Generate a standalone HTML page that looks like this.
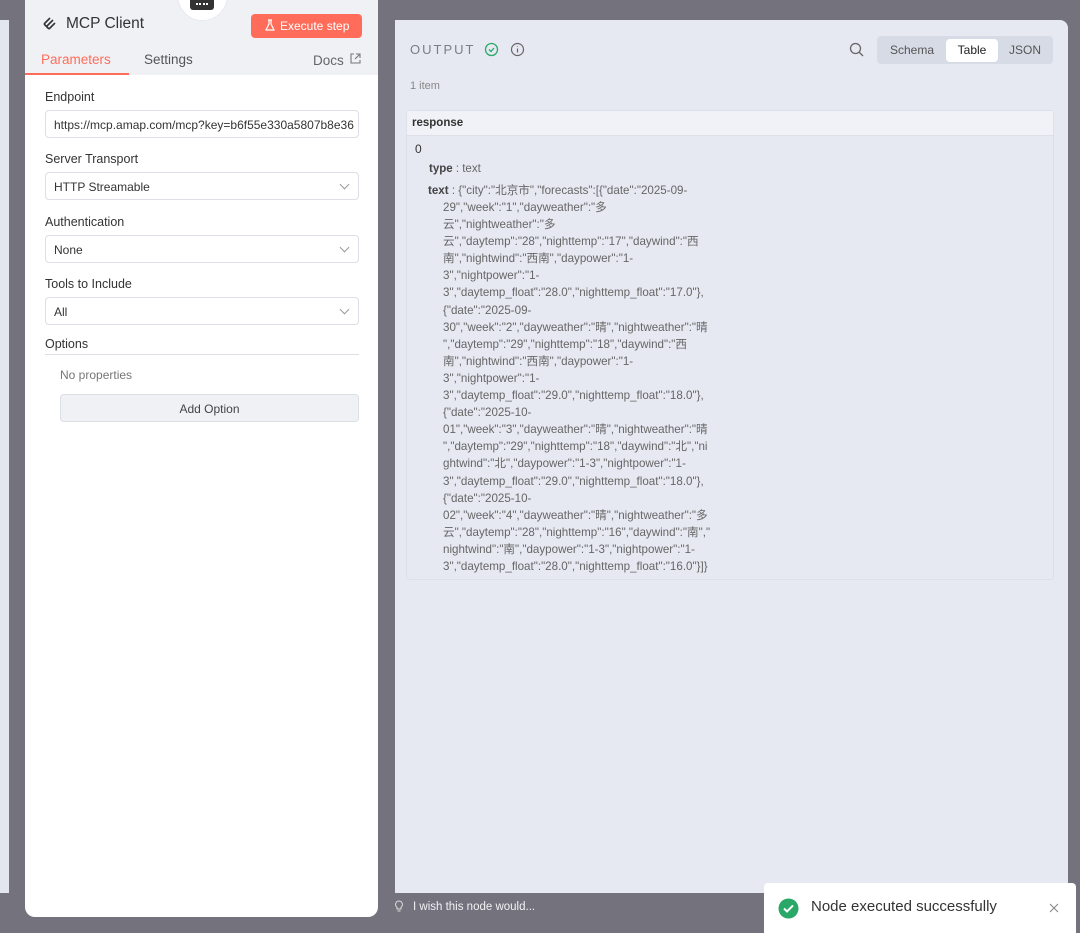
<!DOCTYPE html>
<html><head><meta charset="utf-8"><style>
*{box-sizing:border-box;margin:0;padding:0}
body{width:1080px;height:929px;background:#74727d;font-family:"Liberation Sans","Noto Sans CJK SC",sans-serif;position:relative;overflow:hidden;color:#333}
.abs{position:absolute}
.leftstrip{left:0;top:20px;width:9px;height:873px;background:#e3e6ef}
.node{left:25px;top:0;width:353px;height:917px;background:#fff;border-radius:0 0 10px 10px}
.hdr{left:0;top:0;width:353px;height:75px;background:#f0f1f5}
.lbl{font-size:12.5px;color:#333;position:absolute;left:20px}
.inp{position:absolute;left:20px;width:314px;height:28px;border:1px solid #dcdfe6;border-radius:4px;background:#fff;font-size:12px;color:#333;padding:7px 8px;white-space:nowrap;overflow:hidden}
.chev{position:absolute;right:10px;top:8px;width:7px;height:7px;border-right:1px solid #999;border-bottom:1px solid #999;transform:rotate(45deg)}
.out{left:395px;top:20px;width:673px;height:873px;background:#e6e9f2;border-radius:0 8px 0 0}
.tbl{position:absolute;left:11px;top:90px;width:648px;height:470px;border:1px solid #dde0e8;border-radius:3px}
.json{position:absolute;left:48px;top:162px;font-size:11.6px;line-height:17.1px;color:#666;white-space:nowrap}
</style></head><body>
<div class="abs leftstrip"></div>
<div class="abs node">
 <div class="abs hdr"></div>
 <div class="abs" style="left:152px;top:-30px;width:51px;height:51px;border-radius:50%;background:#fff;border:1px solid #e8e8ee"></div>
 <div class="abs" style="left:165px;top:-4px;width:24px;height:14px;background:#333;border-radius:3px"></div>
 <div class="abs" style="left:171px;top:3px;width:12px;height:2px;border-top:2px dotted #fff"></div>
 <svg class="abs" style="left:17px;top:16px" width="16" height="16" viewBox="0 0 16 16" fill="none" stroke="#333" stroke-width="1.6"><path d="M2 8l6-6M4 11l7-7M7 13l6-6M2 8l5 5"/></svg>
 <div class="abs" style="left:41px;top:15px;font-size:15.5px;color:#333">MCP Client</div>
 <div class="abs" style="left:226px;top:14px;width:111px;height:24px;background:#ff6d5a;border-radius:4px;color:#fff;font-size:12px;padding:5px 0 0 29px">Execute step</div>
 <svg class="abs" style="left:240px;top:19px" width="10" height="13" viewBox="0 0 10 13" fill="none" stroke="#fff" stroke-width="1.2"><path d="M3 1h4M4 1v4L1 11h8L6 5V1"/></svg>
 <div class="abs" style="left:16px;top:52px;font-size:13.5px;color:#ff6d5a">Parameters</div>
 <div class="abs" style="left:0;top:73px;width:104px;height:2px;background:#ff6d5a"></div>
 <div class="abs" style="left:119px;top:52px;font-size:13.5px;color:#555">Settings</div>
 <div class="abs" style="left:288px;top:53px;font-size:13.5px;color:#666">Docs</div>
 <svg class="abs" style="left:325px;top:53px" width="11" height="11" viewBox="0 0 11 11" fill="none" stroke="#777" stroke-width="1.1"><path d="M4 1H1v9h9V7M6 1h4v4M10 1L5 6"/></svg>
 <div class="lbl" style="top:90px">Endpoint</div>
 <div class="inp" style="top:110px">https://mcp.amap.com/mcp?key=b6f55e330a5807b8e36</div>
 <div class="lbl" style="top:152px">Server Transport</div>
 <div class="inp" style="top:172px">HTTP Streamable<div class="chev"></div></div>
 <div class="lbl" style="top:215px">Authentication</div>
 <div class="inp" style="top:235px">None<div class="chev"></div></div>
 <div class="lbl" style="top:277px">Tools to Include</div>
 <div class="inp" style="top:297px">All<div class="chev"></div></div>
 <div class="lbl" style="top:337px">Options</div>
 <div class="abs" style="left:20px;top:354px;width:314px;height:1px;background:#dcdfe6"></div>
 <div class="abs" style="left:35px;top:368px;font-size:12px;color:#777">No properties</div>
 <div class="abs" style="left:35px;top:394px;width:299px;height:28px;background:#f0f1f5;border:1px solid #dcdfe6;border-radius:4px;text-align:center;font-size:12px;color:#444;padding-top:7px">Add Option</div>
</div>
<div class="abs out">
 <div class="abs" style="left:15px;top:22px;font-size:13px;letter-spacing:2px;color:#7a7d88">OUTPUT</div>
 <svg class="abs" style="left:89px;top:22px" width="15" height="15" viewBox="0 0 15 15" fill="none" stroke="#29a868" stroke-width="1.3"><circle cx="7.5" cy="7.5" r="6"/><path d="M5 7.5l2 2 3-3.5"/></svg>
 <svg class="abs" style="left:115px;top:22px" width="15" height="15" viewBox="0 0 15 15" fill="none" stroke="#666" stroke-width="1.2"><circle cx="7.5" cy="7.5" r="6"/><path d="M7.5 6.5v4M7.5 4.3v.6"/></svg>
 <svg class="abs" style="left:454px;top:22px" width="15" height="15" viewBox="0 0 15 15" fill="none" stroke="#666" stroke-width="1.3"><circle cx="6.5" cy="6.5" r="5"/><path d="M10 10l4 4"/></svg>
 <div class="abs" style="left:482px;top:16px;width:176px;height:28px;background:#d7dbe5;border-radius:4px"></div>
 <div class="abs" style="left:495px;top:23px;font-size:12px;color:#555">Schema</div>
 <div class="abs" style="left:551px;top:19px;width:52px;height:23px;background:#fff;border-radius:4px;font-size:12px;color:#222;text-align:center;padding-top:4px">Table</div>
 <div class="abs" style="left:614px;top:23px;font-size:12px;color:#555">JSON</div>
 <div class="abs" style="left:15px;top:60px;font-size:11px;color:#888">1 item</div>
 <div class="tbl">
  <div style="height:25px;background:#f0f2f7;border-bottom:1px solid #dde0e8;font-size:11.5px;font-weight:bold;color:#333;padding:6px 0 0 5px">response</div>
  <div class="abs" style="left:8px;top:31px;font-size:12px;color:#333">0</div>
  <div class="abs" style="left:22px;top:52px;font-size:11.5px;color:#666"><b style="color:#444">type</b> : text</div>
 </div>
 <div class="json" style="left:33px;top:162px"><b style="color:#444">text</b> : {"city":"北京市","forecasts":[{"date":"2025-09-</div>
 <div class="json" style="top:179px">29","week":"1","dayweather":"多<br>云","nightweather":"多<br>云","daytemp":"28","nighttemp":"17","daywind":"西<br>南","nightwind":"西南","daypower":"1-<br>3","nightpower":"1-<br>3","daytemp_float":"28.0","nighttemp_float":"17.0"},<br>{"date":"2025-09-<br>30","week":"2","dayweather":"晴","nightweather":"晴<br>","daytemp":"29","nighttemp":"18","daywind":"西<br>南","nightwind":"西南","daypower":"1-<br>3","nightpower":"1-<br>3","daytemp_float":"29.0","nighttemp_float":"18.0"},<br>{"date":"2025-10-<br>01","week":"3","dayweather":"晴","nightweather":"晴<br>","daytemp":"29","nighttemp":"18","daywind":"北","ni<br>ghtwind":"北","daypower":"1-3","nightpower":"1-<br>3","daytemp_float":"29.0","nighttemp_float":"18.0"},<br>{"date":"2025-10-<br>02","week":"4","dayweather":"晴","nightweather":"多<br>云","daytemp":"28","nighttemp":"16","daywind":"南","<br>nightwind":"南","daypower":"1-3","nightpower":"1-<br>3","daytemp_float":"28.0","nighttemp_float":"16.0"}]}</div>
</div>
<svg class="abs" style="left:394px;top:900px" width="10" height="14" viewBox="0 0 10 14" fill="none" stroke="#ddd" stroke-width="1"><path d="M5 1a3.5 3.5 0 0 0-2 6.3V9h4V7.3A3.5 3.5 0 0 0 5 1zM3.5 11h3"/></svg>
<div class="abs" style="left:413px;top:901px;font-size:11.5px;color:#f2f2f5">I wish this node would...</div>
<div class="abs" style="left:764px;top:883px;width:312px;height:50px;background:#fff;border-radius:4px 4px 0 0"></div>
<svg class="abs" style="left:778px;top:898px" width="21" height="21" viewBox="0 0 21 21"><circle cx="10.5" cy="10.5" r="10" fill="#29a868"/><path d="M6 10.5l3 3 6-6" fill="none" stroke="#fff" stroke-width="2"/></svg>
<div class="abs" style="left:811px;top:898px;font-size:15px;color:#333">Node executed successfully</div>
<svg class="abs" style="left:1049px;top:903px" width="10" height="10" viewBox="0 0 10 10" stroke="#888" stroke-width="1.1"><path d="M1 1l8 8M9 1l-8 8"/></svg>
</body></html>
